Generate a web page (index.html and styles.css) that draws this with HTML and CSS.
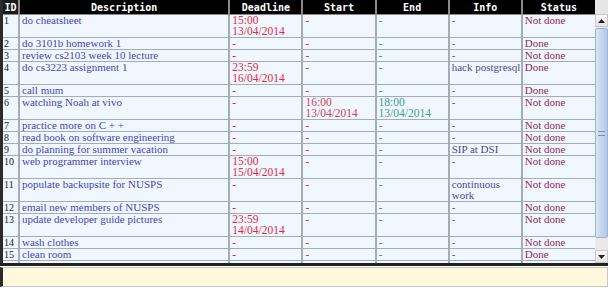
FILE: index.html
```html
<!DOCTYPE html>
<html>
<head>
<meta charset="utf-8">
<link rel="stylesheet" href="styles.css">
</head>
<body>
<div class="app">
  <div class="listpane">
    <div class="tablewrap">
      <table class="tasks">
        <colgroup>
          <col class="c-id"><col class="c-desc"><col class="c-mid"><col class="c-mid"><col class="c-mid"><col class="c-mid"><col class="c-mid">
        </colgroup>
        <thead>
          <tr><th>ID</th><th>Description</th><th>Deadline</th><th>Start</th><th>End</th><th>Info</th><th>Status</th></tr>
        </thead>
        <tbody>
          <tr><td class="id">1</td><td class="desc">do cheatsheet</td><td class="dl">15:00<br>13/04/2014</td><td class="st">-</td><td class="en">-</td><td class="inf">-</td><td class="sts">Not done</td></tr>
          <tr><td class="id">2</td><td class="desc">do 3101b homework 1</td><td class="dl">-</td><td class="st">-</td><td class="en">-</td><td class="inf">-</td><td class="sts">Done</td></tr>
          <tr><td class="id">3</td><td class="desc">review cs2103 week 10 lecture</td><td class="dl">-</td><td class="st">-</td><td class="en">-</td><td class="inf">-</td><td class="sts">Not done</td></tr>
          <tr><td class="id">4</td><td class="desc">do cs3223 assignment 1</td><td class="dl">23:59<br>16/04/2014</td><td class="st">-</td><td class="en">-</td><td class="inf">hack postgresql</td><td class="sts">Done</td></tr>
          <tr><td class="id">5</td><td class="desc">call mum</td><td class="dl">-</td><td class="st">-</td><td class="en">-</td><td class="inf">-</td><td class="sts">Done</td></tr>
          <tr><td class="id">6</td><td class="desc">watching Noah at vivo</td><td class="dl">-</td><td class="st">16:00<br>13/04/2014</td><td class="en">18:00<br>13/04/2014</td><td class="inf">-</td><td class="sts">Not done</td></tr>
          <tr><td class="id">7</td><td class="desc">practice more on C + +</td><td class="dl">-</td><td class="st">-</td><td class="en">-</td><td class="inf">-</td><td class="sts">Not done</td></tr>
          <tr><td class="id">8</td><td class="desc">read book on software engineering</td><td class="dl">-</td><td class="st">-</td><td class="en">-</td><td class="inf">-</td><td class="sts">Not done</td></tr>
          <tr><td class="id">9</td><td class="desc">do planning for summer vacation</td><td class="dl">-</td><td class="st">-</td><td class="en">-</td><td class="inf">SIP at DSI</td><td class="sts">Not done</td></tr>
          <tr><td class="id">10</td><td class="desc">web programmer interview</td><td class="dl">15:00<br>15/04/2014</td><td class="st">-</td><td class="en">-</td><td class="inf">-</td><td class="sts">Not done</td></tr>
          <tr><td class="id">11</td><td class="desc">populate backupsite for NUSPS</td><td class="dl">-</td><td class="st">-</td><td class="en">-</td><td class="inf">continuous<br>work</td><td class="sts">Not done</td></tr>
          <tr><td class="id">12</td><td class="desc">email new members of NUSPS</td><td class="dl">-</td><td class="st">-</td><td class="en">-</td><td class="inf">-</td><td class="sts">Not done</td></tr>
          <tr><td class="id">13</td><td class="desc">update developer guide pictures</td><td class="dl">23:59<br>14/04/2014</td><td class="st">-</td><td class="en">-</td><td class="inf">-</td><td class="sts">Not done</td></tr>
          <tr><td class="id">14</td><td class="desc">wash clothes</td><td class="dl">-</td><td class="st">-</td><td class="en">-</td><td class="inf">-</td><td class="sts">Not done</td></tr>
          <tr><td class="id">15</td><td class="desc">clean room</td><td class="dl">-</td><td class="st">-</td><td class="en">-</td><td class="inf">-</td><td class="sts">Done</td></tr>
          <tr class="partial"><td></td><td></td><td></td><td></td><td></td><td></td><td></td></tr>
        </tbody>
      </table>
    </div>
    <div class="scrollbar">
      <div class="corner"></div>
      <div class="sb-btn"><svg width="7" height="4" viewBox="0 0 7 4"><path d="M0 4 L3.5 0 L7 4 Z" fill="#222"/></svg></div>
      <div class="sb-track">
        <div class="sb-thumb"><span class="grip"></span></div>
      </div>
      <div class="sb-btn"><svg width="7" height="4" viewBox="0 0 7 4"><path d="M0 0 L3.5 4 L7 0 Z" fill="#222"/></svg></div>
    </div>
  </div>
  <div class="divider"></div>
  <div class="inputbox"></div>
</div>
</body>
</html>
```
FILE: styles.css
```css
html, body {
  margin: 0;
  padding: 0;
  background: #ffffff;
}
.app {
  width: 608px;
  height: 290px;
  display: flex;
  flex-direction: column;
}
.listpane {
  display: flex;
  height: 263px;
  border-left: 3px solid #2b2b2b;
  box-sizing: border-box;
}
.tablewrap {
  width: 592px;
  overflow: hidden;
  background: #f0f7fe;
}
.tasks {
  border-collapse: collapse;
  table-layout: fixed;
  width: 592px;
  font-family: "Liberation Serif", serif;
  font-size: 11px;
  line-height: 11px;
}
.c-id { width: 16px; }
.c-desc { width: 210px; }
.c-mid { width: 73px; }
.tasks th {
  background: #000;
  color: #fff;
  font-family: "DejaVu Sans Mono", monospace;
  font-weight: bold;
  font-size: 10px;
  line-height: 13px;
  height: 14px;
  padding: 0;
  border-left: 2px solid #8a8a8a;
  border-bottom: 1px solid #8a8a8a;
  text-align: center;
  white-space: nowrap;
  overflow: hidden;
}
.tasks th:first-child {
  border-left: none;
  background: #1a1a1a;
}
.tasks td {
  padding: 0 0 0 2px;
  vertical-align: top;
  border-left: 2px solid #a3acb9;
  border-bottom: 1px solid #a3acb9;
  white-space: nowrap;
  overflow: hidden;
}
.tasks td:first-child {
  border-left: none;
  padding-left: 1px;
}
.tasks .partial td {
  height: 11px;
}
.id { color: #222; font-size: 10px; }
.desc { color: #4646b8; }
.dl { color: #e5283e; font-size: 11.5px; }
.st { color: #cf3f54; font-size: 11.5px; }
.en { color: #3f9c9c; font-size: 11.5px; }
.inf { color: #4f4796; }
.sts { color: #8e2a66; }
.scrollbar {
  width: 13px;
  display: flex;
  flex-direction: column;
  background: #e8e8e8;
}
.corner {
  height: 14px;
  background: #e6e6e6;
}
.sb-btn {
  height: 13px;
  background: linear-gradient(#fbfbfb, #e2e2e2);
  border: 1px solid #c9c9c9;
  box-sizing: border-box;
  display: flex;
  align-items: center;
  justify-content: center;
}
.sb-track {
  flex: 1;
  background: #e9e9e9;
  padding: 1px 0 12px 0;
  display: flex;
  flex-direction: column;
}
.sb-thumb {
  flex: 1;
  background: linear-gradient(90deg, #dbe6f4, #c4d6ee 50%, #b4c8e4);
  border: 1px solid #9fb4d3;
  border-radius: 2px;
  display: flex;
  align-items: center;
  justify-content: center;
}
.grip {
  width: 7px;
  height: 5px;
  border-top: 1px solid #7a8fb0;
  border-bottom: 1px solid #7a8fb0;
  box-sizing: border-box;
}
.divider {
  height: 3px;
  background: #222;
}
.inputbox {
  margin-top: 1px;
  height: 20px;
  background: #fff8dc;
  border: 1px solid #c8c8c8;
  border-left: 3px solid #2b2b2b;
  box-sizing: border-box;
}
```
